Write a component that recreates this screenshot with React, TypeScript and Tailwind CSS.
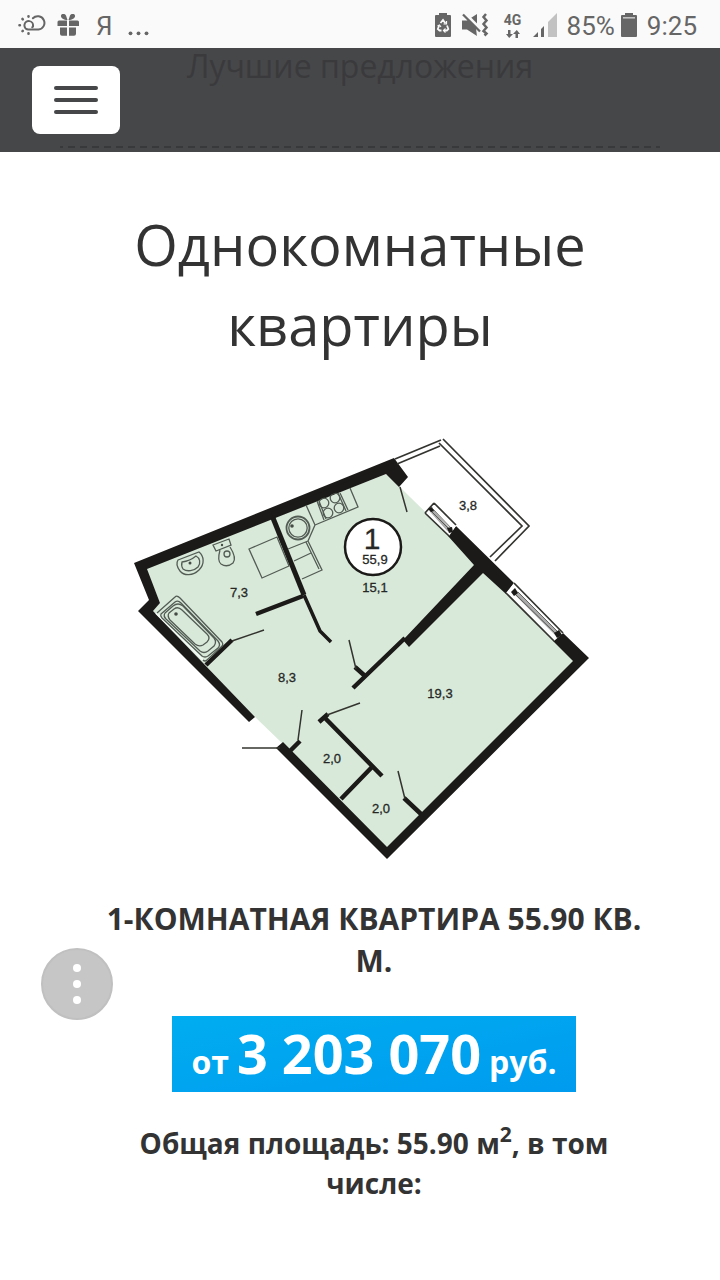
import React from "react";

function StatusBar() {
  return (
    <div className="flex h-12 items-center justify-between bg-[#fafafa] pt-1 pr-[23px] pl-[18px] font-[Roboto,sans-serif] text-[26px] leading-8 text-[#666]">
      <div className="flex items-center">
        <svg className="h-6 w-7" viewBox="18 14 28 24" fill="none" stroke="#666" strokeWidth="2" strokeLinecap="round" aria-hidden="true">
          <path d="M33 26a4.300 4.300 0 1 0-5 3.600h10.500a6.700 6.700 0 1 0-5.600-11.300" />
          <path d="M33 26q0 1-.8 1.200" />
          <path d="M28.500 16.200v.4M22.500 19l.3.3M19.500 25.200h.4M22.500 31.200l.3-.3M28.500 33.800v-.4" strokeWidth="2.600" />
        </svg>
        <svg className="ml-2.5 h-6 w-6" viewBox="56 15 24 24" fill="#666" aria-hidden="true">
          <path d="M59 21.500h8v5.500h-9.500v-4q0-1.500 1.500-1.500ZM69 21.500h8.500q1.500 0 1.500 1.500v4H69ZM60 28.500h7v8.300h-5q-2 0-2-2ZM69 28.500h7v6.300q0 2-2 2h-5Z" />
          <path d="M67.500 21c-4 0-7-2-6.500-4.500.5-2 3.500-2.500 5 0ZM68.500 21c4 0 7-2 6.500-4.500-.5-2-3.500-2.500-5 0Z" />
        </svg>
        <span className="ml-4">Я</span>
        <svg className="ml-3.5 h-6 w-6" viewBox="127 15 24 24" fill="#666" aria-hidden="true">
          <circle cx="130.500" cy="34.300" r="1.900" />
          <circle cx="138.500" cy="34.300" r="1.900" />
          <circle cx="146.500" cy="34.300" r="1.900" />
        </svg>
      </div>
      <div className="flex items-center">
        <svg className="h-7 w-4" viewBox="437 12 16 28" fill="#666" aria-hidden="true">
          <path d="M441 15v-2h8v2h3q1 0 1 1v20q0 1-1 1h-14q-1 0-1-1V16q0-1 1-1Z" />
          <g fill="none" stroke="#fafafa" strokeWidth="1.800">
            <path d="M442.500 23l2.500-3 2.500 3.500M449 25.500l1.300 3.500-1.500 1.500h-3M443.500 30.500h-2l-1.700-1.500 1.400-3.500" />
            <path d="M448.500 21v3h-3M447.500 28.500l-2 2 2 2M439.500 26l2-1 1.500 2" strokeWidth="1.200" />
          </g>
        </svg>
        <svg className="ml-2 h-7 w-8" viewBox="461 12 32 28" aria-hidden="true">
          <path d="M464 20.500h5l10-6.500v22l-10-6.500h-5Z" fill="#666" />
          <path d="M466 12.500l17 17" stroke="#fafafa" strokeWidth="3" />
          <path d="M478 28l4 4-3 5Z" fill="#fafafa" />
          <path d="M465 14.500l17 17" stroke="#666" strokeWidth="2.300" />
          <path d="M488 14l-2.500 3 3 3.500-3 3.500 3 3.500-3 3.500 3 2.500-2 2" fill="none" stroke="#666" strokeWidth="2.500" />
        </svg>
        <div className="ml-3 flex w-5 flex-col items-center">
          <span className="text-[14px] leading-3 font-bold">4G</span>
          <svg className="mt-1 h-2 w-4" viewBox="0 0 16 8" fill="#666" aria-hidden="true">
            <path d="M3 0h2.500v4H8L4.200 8 1 4h2ZM10.500 8H13V4h2L11.800 0 8 4h2.500Z" />
          </svg>
        </div>
        <svg className="ml-2.5 h-7 w-6" viewBox="534 12 24 28" aria-hidden="true">
          <path d="M534 37l5-5v5ZM542 29l3-3v11h-3Z" fill="#666" />
          <path d="M549 22l9-9v24h-9Z" fill="#c2c2c2" />
        </svg>
        <span className="ml-2.5">85%</span>
        <svg className="ml-1.5 h-7 w-4" viewBox="622 12 16 28" aria-hidden="true">
          <path d="M626 15v-2h8v2h3q1 0 1 1v20q0 1-1 1h-14q-1 0-1-1V16q0-1 1-1Z" fill="#666" />
          <path d="M624 17.800h12" stroke="#c8c8c8" strokeWidth="1.500" />
        </svg>
        <span className="ml-2.5">9:25</span>
      </div>
    </div>
  );
}

function Header() {
  return (
    <header className="grid h-[104px] bg-[#464749]">
      <div className="col-start-1 row-start-1 text-center text-[32px] leading-9 text-[#3a3a3c]">
        Лучшие предложения
      </div>
      <svg className="col-start-1 row-start-1 mx-[60px] mb-1 h-0.5 w-[calc(100%-120px)] self-end" aria-hidden="true">
        <line x1="0" y1="1" x2="100%" y2="1" stroke="#38393b" strokeWidth="2" strokeDasharray="7 5" strokeDashoffset="4" />
      </svg>
      <button
        type="button"
        aria-label="Меню"
        className="col-start-1 row-start-1 ml-8 flex h-[68px] w-[88px] flex-col items-center justify-center gap-2 self-center justify-self-start rounded-lg bg-white"
      >
        <span className="h-1 w-11 rounded-full bg-[#464749]" />
        <span className="h-1 w-11 rounded-full bg-[#464749]" />
        <span className="h-1 w-11 rounded-full bg-[#464749]" />
      </button>
    </header>
  );
}

function FloorPlan() {
  return (
    <svg className="mx-auto block w-full max-w-[480px]" viewBox="120 430 480 440" role="img" aria-label="План квартиры">
      <path
        d="M146 568 386 474 399 486 410 497 449 535 474 560 506 593 553 640 575 661 387 848 282 743 255 717 153 611 160 603Z"
        fill="#d8e9d9"
      />
      {/* load-bearing walls */}
      <g fill="#1b1a18">
        <path d="M134 563 394 458 408 477 399 487 386 474 147 569 160 603 153 611 255 717 249 722 138 611 149 600Z" />
        <path d="M283 742 387 847 573 661 553 641 563 633 589 658 387 859 276 748Z" />
        <path d="M456 526 514 583 506 594 483 573 409 647 403 640 474 565 448 536Z" />
      </g>
      {/* inner partitions */}
      <g fill="none" stroke="#1b1a18">
        <path d="M273 518 304 595" strokeWidth="5" />
        <path d="M304 595 320 631 331 642" strokeWidth="3.500" />
        <path d="M256 614 303 596M206 665 232 640M405 638 353 688" strokeWidth="4.500" />
        <path d="M355 667 365 676M319 722 328 714M324 717 382 776M373 766 341 799M288 753 300 741M404 798 421 814" strokeWidth="4.500" />
      </g>
      {/* door leaves */}
      <g fill="none" stroke="#34342f" strokeWidth="1.500">
        <path d="M232 641 264 630M349 640 356 669M327 715 360 703M298 740 302 710M398 771 405 799M242 748H280M400 487 407 512" />
      </g>
      {/* balcony and windows */}
      <path d="M425 513 434 503 456 526 449 536ZM514 583 563 633 554 641 506 593Z" fill="#fff" />
      <g fill="none" stroke="#33332f" strokeWidth="1.700">
        <path d="M395 459 441 440M397 464 440 446" />
        <path d="M443 439 529 526 495 561M439 443 522 526 490 557" />
        <path d="M434 503 456 525M425 513 449 536M425 513 434 503M514 583 563 633M506 593 554 641" />
        <path d="M431 510 449 530M515 592 557 634" stroke="#aaa" strokeWidth="4" />
        <path d="M429 509 450 530M433 509 452 529M514 593 556 634M518 592 559 633" strokeWidth="0.700" />
      </g>
      <g fill="#1b1a18">
        <path d="M428 509 432 507 434 511 431 512ZM447 528 452 527 453 532 449 533ZM511 592 515 588 518 593 514 596ZM554 633 559 630 562 635 557 638Z" />
      </g>
      {/* bathroom */}
      <path d="M156 613 203 660" stroke="#f3faf3" strokeWidth="2" />
      <g fill="none" stroke="#535c54" strokeWidth="1.300">
        <path d="M178 560 199 552C204 556 205 564 199 570 193 576 184 576 180 571 177 567 176 563 178 560Z" />
        <path d="M182 562Q190 561 196 556C200 558 201 563 198 567 194 571 187 572 183 569Q181 566 182 562Z" />
        <path d="M213 545 229 539 231 545 216 551ZM220 550Q217 561 221 564 227 568 233 563 237 558 230 547" />
        <circle cx="227" cy="554" r="3" />
        <path d="M249 549 277 537 289 566 262 578Z" />
        <path d="M157 613 175 597Q177 595 180 598L222 642Q224 645 221 647L207 660Q205 662 203 660" />
        <path d="M161 614 175 602Q178 600 181 603L218 641Q221 645 218 648L208 656Q205 658 202 656L162 618Q160 616 161 614Z" />
        <path d="M165 613 173 606Q178 602 183 606L214 638Q217 642 214 646L208 651Q204 654 200 651L166 619Q163 616 165 613Z" />
        <path d="M169 613 174 609Q178 606 182 610L207 634Q211 638 207 642L203 645Q199 647 195 644L170 620Q167 616 169 613Z" />
      </g>
      <g fill="#454c46">
        <circle cx="190" cy="563" r="1.500" />
        <circle cx="222" cy="545" r="1.200" />
        <circle cx="176" cy="614" r="1.800" />
      </g>
      {/* kitchen */}
      <g fill="none" stroke="#535c54" strokeWidth="1.300">
        <circle cx="298" cy="528" r="11.500" strokeWidth="1.800" />
        <circle cx="298" cy="528" r="9.200" />
        <path d="M306 505 315 525 358 507 350 488M315 525 308 541 322 570 302 579M288 549 308 541M294 561 311 553M306 542 319 569" />
        <path d="M317 501 324 520M319 501 326 519M338 493 346 511M340 493 348 510" />
        <circle cx="324" cy="503" r="4.800" />
        <circle cx="335" cy="498" r="4.800" />
        <circle cx="328" cy="513" r="4.800" />
        <circle cx="339" cy="508" r="4.800" />
      </g>
      <circle cx="292" cy="526" r="1.800" fill="#454c46" />
      <path d="M272 515 394 466" stroke="#1b1a18" strokeWidth="6" />
      <circle cx="373" cy="547" r="28" fill="#fff" stroke="#1b1a18" strokeWidth="2.500" />
      <g
        className="font-['Liberation_Sans',sans-serif]"
        fill="#262826"
        stroke="#262826"
        strokeWidth="0.300"
        fontSize="13"
        textAnchor="middle"
      >
        <text x="372" y="549" fontSize="30">1</text>
        <text x="375" y="564">55,9</text>
        <text x="375" y="592">15,1</text>
        <text x="468" y="510">3,8</text>
        <text x="239" y="597">7,3</text>
        <text x="287" y="682">8,3</text>
        <text x="440" y="698">19,3</text>
        <text x="332" y="763">2,0</text>
        <text x="381" y="813">2,0</text>
      </g>
    </svg>
  );
}

export default function App() {
  return (
    <div className="relative min-h-screen bg-white font-['Open_Sans',sans-serif] text-[#333]">
      <StatusBar />
      <Header />
      <main className="px-[60px] pt-[52px]">
        <h1 className="mx-auto max-w-[520px] text-center text-[56px] leading-[80px]">Однокомнатные квартиры</h1>
        <article className="pt-[66px]">
          <FloorPlan />
          <div className="pt-7 pl-7 text-center">
            <h2 className="text-[30px] leading-[42px] font-bold">1-КОМНАТНАЯ КВАРТИРА 55.90 КВ. М.</h2>
            <p className="mx-auto mt-[34px] flex h-[76px] w-fit items-baseline gap-2 bg-linear-to-br from-[#00adf0] to-[#009bef] px-[19px] text-[32px] leading-[74px] font-bold text-white">
              <span>от</span>
              <span className="text-[54px]">3 203 070</span>
              <span>руб.</span>
            </p>
            <p className="mx-auto mt-[31px] max-w-[520px] text-[28px] leading-10 font-bold">
              Общая площадь: 55.90 м<sup className="-top-3 text-[21px] leading-none">2</sup>, в том числе:
            </p>
          </div>
        </article>
      </main>
      <button
        type="button"
        aria-label="Ещё"
        className="absolute top-[948px] left-[41px] flex size-[72px] flex-col items-center justify-center gap-2 rounded-full border-2 border-[#c0c0c0] bg-[#c6c6c6]"
      >
        <span className="size-2 rounded-full bg-white" />
        <span className="size-2 rounded-full bg-white" />
        <span className="size-2 rounded-full bg-white" />
      </button>
    </div>
  );
}
